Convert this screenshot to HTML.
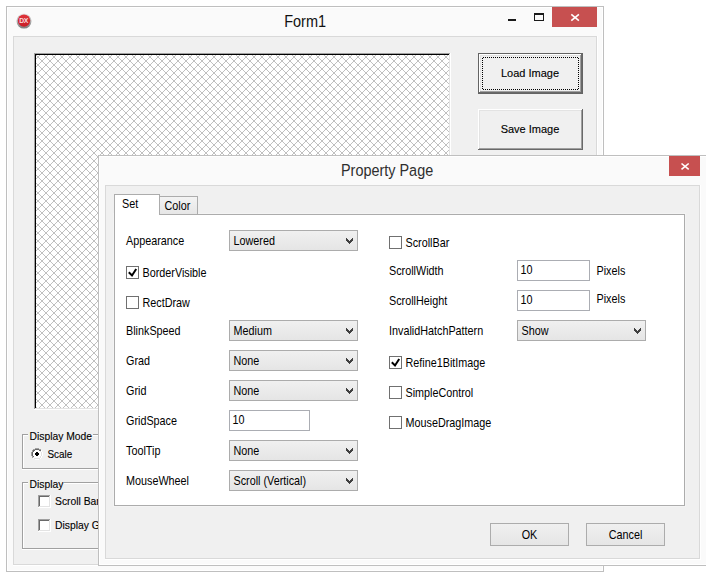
<!DOCTYPE html><html><head><meta charset="utf-8"><title>Form1</title><style>html,body{margin:0;padding:0;width:717px;height:576px;overflow:hidden;background:#fff;}svg{display:block;font-family:"Liberation Sans",sans-serif;}path{shape-rendering:geometricPrecision}circle{shape-rendering:geometricPrecision}text{shape-rendering:geometricPrecision}</style></head><body><svg width="717" height="576" viewBox="0 0 717 576" shape-rendering="crispEdges" font-family="Liberation Sans, sans-serif"><rect x="0" y="0" width="717" height="576" fill="#ffffff"/><rect x="6" y="6" width="598" height="566" fill="#fafafa"/><rect x="6" y="6" width="598" height="1" fill="#bfbfbf"/><rect x="6" y="571" width="598" height="1" fill="#bfbfbf"/><rect x="6" y="6" width="1" height="566" fill="#bfbfbf"/><rect x="603" y="6" width="1" height="566" fill="#bfbfbf"/><rect x="7" y="7" width="596" height="1" fill="#ffffff"/><rect x="7" y="570" width="596" height="1" fill="#ffffff"/><rect x="7" y="7" width="1" height="564" fill="#ffffff"/><rect x="602" y="7" width="1" height="564" fill="#ffffff"/><defs><linearGradient id="ring" x1="0" y1="0" x2="0" y2="1"><stop offset="0" stop-color="#e8e8e8"/><stop offset="1" stop-color="#7a7a7a"/></linearGradient><linearGradient id="redg" x1="0" y1="0" x2="0" y2="1"><stop offset="0" stop-color="#e0343b"/><stop offset="1" stop-color="#c81d26"/></linearGradient></defs><circle cx="24" cy="21.1" r="7.5" fill="url(#ring)"/><circle cx="24" cy="20.6" r="6.2" fill="url(#redg)"/><text x="23.7" y="23" font-size="6.8" font-weight="bold" fill="#fff" fill-opacity="0.85" text-anchor="middle" letter-spacing="-0.3">DX</text><text transform="translate(284.2 27) scale(0.93 1)" x="0" y="0" font-size="15.6" fill="#111" >Form1</text><rect x="508" y="19" width="8" height="2" fill="#1a1a1a"/><rect x="534" y="13" width="10" height="1" fill="#1a1a1a"/><rect x="534" y="20" width="10" height="1" fill="#1a1a1a"/><rect x="534" y="13" width="1" height="8" fill="#1a1a1a"/><rect x="543" y="13" width="1" height="8" fill="#1a1a1a"/><rect x="534" y="14" width="10" height="1" fill="#1a1a1a"/><rect x="552" y="7" width="45" height="20" fill="#c75050"/><path d="M571.3 14.4 L578.9 20.6 M578.9 14.4 L571.3 20.6" stroke="#fff" stroke-width="1.6"/><rect x="13" y="36" width="585" height="530" fill="#ffffff"/><rect x="13" y="36" width="584" height="529" fill="#d9d9d9"/><rect x="14" y="37" width="582" height="527" fill="#f0f0f0"/><defs><pattern id="hatch" x="34" y="53" width="8" height="8" patternUnits="userSpaceOnUse"><rect x="0" y="0" width="1" height="1" fill="#c0c0c0"/><rect x="7" y="0" width="1" height="1" fill="#c0c0c0"/><rect x="1" y="1" width="1" height="1" fill="#c0c0c0"/><rect x="6" y="1" width="1" height="1" fill="#c0c0c0"/><rect x="2" y="2" width="1" height="1" fill="#c0c0c0"/><rect x="5" y="2" width="1" height="1" fill="#c0c0c0"/><rect x="3" y="3" width="1" height="1" fill="#c0c0c0"/><rect x="4" y="3" width="1" height="1" fill="#c0c0c0"/><rect x="3" y="4" width="1" height="1" fill="#c0c0c0"/><rect x="4" y="4" width="1" height="1" fill="#c0c0c0"/><rect x="2" y="5" width="1" height="1" fill="#c0c0c0"/><rect x="5" y="5" width="1" height="1" fill="#c0c0c0"/><rect x="1" y="6" width="1" height="1" fill="#c0c0c0"/><rect x="6" y="6" width="1" height="1" fill="#c0c0c0"/><rect x="0" y="7" width="1" height="1" fill="#c0c0c0"/><rect x="7" y="7" width="1" height="1" fill="#c0c0c0"/></pattern></defs><rect x="34" y="53" width="417" height="357" fill="#ffffff"/><rect x="34" y="53" width="416" height="1" fill="#a0a0a0"/><rect x="34" y="53" width="1" height="356" fill="#a0a0a0"/><rect x="35" y="54" width="414" height="1" fill="#000000"/><rect x="35" y="54" width="1" height="354" fill="#000000"/><rect x="35" y="408" width="414" height="1" fill="#e3e3e3"/><rect x="449" y="54" width="1" height="355" fill="#e3e3e3"/><rect x="36" y="55" width="413" height="353" fill="url(#hatch)"/><rect x="478" y="53" width="105" height="41" fill="#f0f0f0"/><rect x="478" y="53" width="105" height="1" fill="#646464"/><rect x="478" y="93" width="105" height="1" fill="#646464"/><rect x="478" y="53" width="1" height="41" fill="#646464"/><rect x="582" y="53" width="1" height="41" fill="#646464"/><rect x="479" y="54" width="103" height="1" fill="#ffffff"/><rect x="479" y="54" width="1" height="39" fill="#ffffff"/><rect x="479" y="92" width="103" height="1" fill="#696969"/><rect x="581" y="54" width="1" height="39" fill="#696969"/><rect x="480" y="55" width="101" height="1" fill="#e3e3e3"/><rect x="480" y="55" width="1" height="37" fill="#e3e3e3"/><rect x="480" y="91" width="101" height="1" fill="#a0a0a0"/><rect x="580" y="55" width="1" height="37" fill="#a0a0a0"/><defs><pattern id="chk" x="0" y="0" width="2" height="2" patternUnits="userSpaceOnUse"><rect x="0" y="0" width="1" height="1" fill="#000"/><rect x="1" y="1" width="1" height="1" fill="#000"/></pattern></defs><rect x="482" y="57" width="97" height="1" fill="url(#chk)"/><rect x="482" y="89" width="97" height="1" fill="url(#chk)"/><rect x="482" y="57" width="1" height="33" fill="url(#chk)"/><rect x="578" y="57" width="1" height="33" fill="url(#chk)"/><text x="530" y="77" font-size="11" fill="#000" text-anchor="middle" stroke="#000" stroke-width="0.12">Load Image</text><rect x="478" y="109" width="105" height="41" fill="#f0f0f0"/><rect x="478" y="109" width="105" height="1" fill="#ffffff"/><rect x="478" y="109" width="1" height="41" fill="#ffffff"/><rect x="478" y="149" width="105" height="1" fill="#696969"/><rect x="582" y="109" width="1" height="41" fill="#696969"/><rect x="479" y="110" width="103" height="1" fill="#e3e3e3"/><rect x="479" y="110" width="1" height="39" fill="#e3e3e3"/><rect x="479" y="148" width="103" height="1" fill="#a0a0a0"/><rect x="581" y="110" width="1" height="39" fill="#a0a0a0"/><text x="530" y="133" font-size="11" fill="#000" text-anchor="middle" stroke="#000" stroke-width="0.12">Save Image</text><rect x="22" y="434" width="278" height="1" fill="#a0a0a0"/><rect x="22" y="434" width="1" height="35" fill="#a0a0a0"/><rect x="23" y="435" width="277" height="1" fill="#ffffff"/><rect x="23" y="435" width="1" height="34" fill="#ffffff"/><rect x="22" y="468" width="278" height="1" fill="#a0a0a0"/><rect x="22" y="469" width="279" height="1" fill="#ffffff"/><rect x="28" y="428" width="65" height="12" fill="#f0f0f0"/><text transform="translate(29.5 440) scale(0.94 1)" x="0" y="0" font-size="11" fill="#000" stroke="#000" stroke-width="0.12">Display Mode</text><rect x="35" y="448" width="4" height="1" fill="#ffffff"/><rect x="33" y="449" width="8" height="1" fill="#ffffff"/><rect x="32" y="450" width="10" height="1" fill="#ffffff"/><rect x="32" y="451" width="10" height="1" fill="#ffffff"/><rect x="31" y="452" width="12" height="1" fill="#ffffff"/><rect x="31" y="453" width="12" height="1" fill="#ffffff"/><rect x="31" y="454" width="12" height="1" fill="#ffffff"/><rect x="31" y="455" width="12" height="1" fill="#ffffff"/><rect x="32" y="456" width="10" height="1" fill="#ffffff"/><rect x="32" y="457" width="10" height="1" fill="#ffffff"/><rect x="33" y="458" width="8" height="1" fill="#ffffff"/><rect x="35" y="459" width="4" height="1" fill="#ffffff"/><rect x="35" y="448" width="1" height="1" fill="#a0a0a0"/><rect x="36" y="448" width="1" height="1" fill="#a0a0a0"/><rect x="37" y="448" width="1" height="1" fill="#a0a0a0"/><rect x="38" y="448" width="1" height="1" fill="#a0a0a0"/><rect x="33" y="449" width="1" height="1" fill="#a0a0a0"/><rect x="34" y="449" width="1" height="1" fill="#a0a0a0"/><rect x="35" y="449" width="1" height="1" fill="#696969"/><rect x="36" y="449" width="1" height="1" fill="#696969"/><rect x="37" y="449" width="1" height="1" fill="#696969"/><rect x="38" y="449" width="1" height="1" fill="#696969"/><rect x="39" y="449" width="1" height="1" fill="#a0a0a0"/><rect x="40" y="449" width="1" height="1" fill="#a0a0a0"/><rect x="32" y="450" width="1" height="1" fill="#a0a0a0"/><rect x="33" y="450" width="1" height="1" fill="#696969"/><rect x="34" y="450" width="1" height="1" fill="#696969"/><rect x="39" y="450" width="1" height="1" fill="#696969"/><rect x="40" y="450" width="1" height="1" fill="#696969"/><rect x="32" y="451" width="1" height="1" fill="#a0a0a0"/><rect x="33" y="451" width="1" height="1" fill="#696969"/><rect x="40" y="451" width="1" height="1" fill="#e3e3e3"/><rect x="31" y="452" width="1" height="1" fill="#a0a0a0"/><rect x="32" y="452" width="1" height="1" fill="#696969"/><rect x="41" y="452" width="1" height="1" fill="#e3e3e3"/><rect x="31" y="453" width="1" height="1" fill="#a0a0a0"/><rect x="32" y="453" width="1" height="1" fill="#696969"/><rect x="41" y="453" width="1" height="1" fill="#e3e3e3"/><rect x="31" y="454" width="1" height="1" fill="#a0a0a0"/><rect x="32" y="454" width="1" height="1" fill="#696969"/><rect x="41" y="454" width="1" height="1" fill="#e3e3e3"/><rect x="31" y="455" width="1" height="1" fill="#a0a0a0"/><rect x="32" y="455" width="1" height="1" fill="#696969"/><rect x="41" y="455" width="1" height="1" fill="#e3e3e3"/><rect x="32" y="456" width="1" height="1" fill="#a0a0a0"/><rect x="33" y="456" width="1" height="1" fill="#696969"/><rect x="40" y="456" width="1" height="1" fill="#e3e3e3"/><rect x="32" y="457" width="1" height="1" fill="#a0a0a0"/><rect x="33" y="457" width="1" height="1" fill="#e3e3e3"/><rect x="40" y="457" width="1" height="1" fill="#e3e3e3"/><rect x="34" y="458" width="1" height="1" fill="#e3e3e3"/><rect x="35" y="458" width="1" height="1" fill="#e3e3e3"/><rect x="36" y="458" width="1" height="1" fill="#e3e3e3"/><rect x="37" y="458" width="1" height="1" fill="#e3e3e3"/><rect x="38" y="458" width="1" height="1" fill="#e3e3e3"/><rect x="39" y="458" width="1" height="1" fill="#e3e3e3"/><rect x="36" y="452" width="1" height="1" fill="#000000"/><rect x="37" y="452" width="1" height="1" fill="#000000"/><rect x="35" y="453" width="1" height="1" fill="#000000"/><rect x="36" y="453" width="1" height="1" fill="#000000"/><rect x="37" y="453" width="1" height="1" fill="#000000"/><rect x="38" y="453" width="1" height="1" fill="#000000"/><rect x="35" y="454" width="1" height="1" fill="#000000"/><rect x="36" y="454" width="1" height="1" fill="#000000"/><rect x="37" y="454" width="1" height="1" fill="#000000"/><rect x="38" y="454" width="1" height="1" fill="#000000"/><rect x="36" y="455" width="1" height="1" fill="#000000"/><rect x="37" y="455" width="1" height="1" fill="#000000"/><text transform="translate(47.5 458) scale(0.9 1)" x="0" y="0" font-size="11" fill="#000" stroke="#000" stroke-width="0.12">Scale</text><rect x="22" y="482" width="278" height="1" fill="#a0a0a0"/><rect x="22" y="482" width="1" height="67" fill="#a0a0a0"/><rect x="23" y="483" width="277" height="1" fill="#ffffff"/><rect x="23" y="483" width="1" height="66" fill="#ffffff"/><rect x="22" y="548" width="278" height="1" fill="#a0a0a0"/><rect x="22" y="549" width="279" height="1" fill="#ffffff"/><rect x="28" y="476" width="36" height="12" fill="#f0f0f0"/><text transform="translate(29.5 488) scale(0.94 1)" x="0" y="0" font-size="11" fill="#000" stroke="#000" stroke-width="0.12">Display</text><rect x="38" y="495" width="13" height="13" fill="#ffffff"/><rect x="38" y="495" width="12" height="1" fill="#a0a0a0"/><rect x="38" y="495" width="1" height="12" fill="#a0a0a0"/><rect x="39" y="496" width="10" height="1" fill="#696969"/><rect x="39" y="496" width="1" height="10" fill="#696969"/><rect x="39" y="506" width="11" height="1" fill="#e3e3e3"/><rect x="49" y="496" width="1" height="11" fill="#e3e3e3"/><text transform="translate(55 505) scale(0.94 1)" x="0" y="0" font-size="11" fill="#000" stroke="#000" stroke-width="0.12">Scroll Bar</text><rect x="38" y="519" width="13" height="13" fill="#ffffff"/><rect x="38" y="519" width="12" height="1" fill="#a0a0a0"/><rect x="38" y="519" width="1" height="12" fill="#a0a0a0"/><rect x="39" y="520" width="10" height="1" fill="#696969"/><rect x="39" y="520" width="1" height="10" fill="#696969"/><rect x="39" y="530" width="11" height="1" fill="#e3e3e3"/><rect x="49" y="520" width="1" height="11" fill="#e3e3e3"/><text transform="translate(55 529) scale(0.94 1)" x="0" y="0" font-size="11" fill="#000" stroke="#000" stroke-width="0.12">Display Grid</text><rect x="98" y="155" width="608" height="411" fill="#fafafa"/><rect x="98" y="155" width="608" height="1" fill="#bfbfbf"/><rect x="98" y="155" width="1" height="411" fill="#bfbfbf"/><rect x="98" y="565" width="608" height="1" fill="#bfbfbf"/><rect x="99" y="156" width="607" height="1" fill="#ffffff"/><rect x="99" y="156" width="1" height="409" fill="#ffffff"/><rect x="99" y="564" width="607" height="1" fill="#ffffff"/><text transform="translate(341 176) scale(0.925 1)" x="0" y="0" font-size="15.6" fill="#2e2e2e" >Property Page</text><rect x="669" y="156" width="31" height="20" fill="#c75050"/><path d="M681.5 163.5 L688.7 169.4 M688.7 163.5 L681.5 169.4" stroke="#fff" stroke-width="1.6"/><rect x="105" y="185" width="596" height="375" fill="#ffffff"/><rect x="105" y="185" width="595" height="374" fill="#d9d9d9"/><rect x="106" y="186" width="593" height="372" fill="#f0f0f0"/><rect x="113" y="213" width="573" height="294" fill="#f4f4f4"/><rect x="114" y="214" width="571" height="292" fill="#acacac"/><rect x="115" y="215" width="569" height="290" fill="#ffffff"/><defs><linearGradient id="tg" x1="0" y1="0" x2="0" y2="1"><stop offset="0" stop-color="#f3f3f3"/><stop offset="1" stop-color="#e6e6e6"/></linearGradient><linearGradient id="cg" x1="0" y1="0" x2="0" y2="1"><stop offset="0" stop-color="#f0f0f0"/><stop offset="1" stop-color="#e5e5e5"/></linearGradient></defs><rect x="159" y="196" width="39" height="19" fill="#acacac"/><rect x="160" y="197" width="37" height="17" fill="url(#tg)"/><rect x="114" y="194" width="46" height="21" fill="#acacac"/><rect x="115" y="195" width="44" height="21" fill="#ffffff"/><text transform="translate(122 208) scale(0.9 1)" x="0" y="0" font-size="12" fill="#000" >Set</text><text transform="translate(164.5 210) scale(0.9 1)" x="0" y="0" font-size="12" fill="#000" >Color</text><text transform="translate(126 245) scale(0.9 1)" x="0" y="0" font-size="12" fill="#000" >Appearance</text><rect x="229" y="230" width="129" height="21" fill="#acacac"/><rect x="230" y="231" width="127" height="19" fill="url(#cg)"/><text transform="translate(233.5 245) scale(0.9 1)" x="0" y="0" font-size="12" fill="#000" >Lowered</text><rect x="346" y="238" width="1" height="1" fill="#404040"/><rect x="352" y="238" width="1" height="1" fill="#404040"/><rect x="346" y="239" width="1" height="1" fill="#404040"/><rect x="347" y="239" width="1" height="1" fill="#404040"/><rect x="351" y="239" width="1" height="1" fill="#404040"/><rect x="352" y="239" width="1" height="1" fill="#404040"/><rect x="346" y="240" width="1" height="1" fill="#404040"/><rect x="347" y="240" width="1" height="1" fill="#404040"/><rect x="348" y="240" width="1" height="1" fill="#404040"/><rect x="350" y="240" width="1" height="1" fill="#404040"/><rect x="351" y="240" width="1" height="1" fill="#404040"/><rect x="352" y="240" width="1" height="1" fill="#404040"/><rect x="347" y="241" width="1" height="1" fill="#404040"/><rect x="348" y="241" width="1" height="1" fill="#404040"/><rect x="349" y="241" width="1" height="1" fill="#404040"/><rect x="350" y="241" width="1" height="1" fill="#404040"/><rect x="351" y="241" width="1" height="1" fill="#404040"/><rect x="348" y="242" width="1" height="1" fill="#404040"/><rect x="349" y="242" width="1" height="1" fill="#404040"/><rect x="350" y="242" width="1" height="1" fill="#404040"/><rect x="349" y="243" width="1" height="1" fill="#404040"/><rect x="126" y="266" width="13" height="13" fill="#707070"/><rect x="127" y="267" width="11" height="11" fill="#ffffff"/><path d="M128.8 272.3 L132 275.5 L136.2 269" fill="none" stroke="#000" stroke-width="2"/><text transform="translate(142.5 277) scale(0.9 1)" x="0" y="0" font-size="12" fill="#000" >BorderVisible</text><rect x="126" y="296" width="13" height="13" fill="#707070"/><rect x="127" y="297" width="11" height="11" fill="#ffffff"/><text transform="translate(142.5 307) scale(0.9 1)" x="0" y="0" font-size="12" fill="#000" >RectDraw</text><text transform="translate(126 335) scale(0.9 1)" x="0" y="0" font-size="12" fill="#000" >BlinkSpeed</text><rect x="229" y="320" width="129" height="21" fill="#acacac"/><rect x="230" y="321" width="127" height="19" fill="url(#cg)"/><text transform="translate(233.5 335) scale(0.9 1)" x="0" y="0" font-size="12" fill="#000" >Medium</text><rect x="346" y="328" width="1" height="1" fill="#404040"/><rect x="352" y="328" width="1" height="1" fill="#404040"/><rect x="346" y="329" width="1" height="1" fill="#404040"/><rect x="347" y="329" width="1" height="1" fill="#404040"/><rect x="351" y="329" width="1" height="1" fill="#404040"/><rect x="352" y="329" width="1" height="1" fill="#404040"/><rect x="346" y="330" width="1" height="1" fill="#404040"/><rect x="347" y="330" width="1" height="1" fill="#404040"/><rect x="348" y="330" width="1" height="1" fill="#404040"/><rect x="350" y="330" width="1" height="1" fill="#404040"/><rect x="351" y="330" width="1" height="1" fill="#404040"/><rect x="352" y="330" width="1" height="1" fill="#404040"/><rect x="347" y="331" width="1" height="1" fill="#404040"/><rect x="348" y="331" width="1" height="1" fill="#404040"/><rect x="349" y="331" width="1" height="1" fill="#404040"/><rect x="350" y="331" width="1" height="1" fill="#404040"/><rect x="351" y="331" width="1" height="1" fill="#404040"/><rect x="348" y="332" width="1" height="1" fill="#404040"/><rect x="349" y="332" width="1" height="1" fill="#404040"/><rect x="350" y="332" width="1" height="1" fill="#404040"/><rect x="349" y="333" width="1" height="1" fill="#404040"/><text transform="translate(126 365) scale(0.9 1)" x="0" y="0" font-size="12" fill="#000" >Grad</text><rect x="229" y="350" width="129" height="21" fill="#acacac"/><rect x="230" y="351" width="127" height="19" fill="url(#cg)"/><text transform="translate(233.5 365) scale(0.9 1)" x="0" y="0" font-size="12" fill="#000" >None</text><rect x="346" y="358" width="1" height="1" fill="#404040"/><rect x="352" y="358" width="1" height="1" fill="#404040"/><rect x="346" y="359" width="1" height="1" fill="#404040"/><rect x="347" y="359" width="1" height="1" fill="#404040"/><rect x="351" y="359" width="1" height="1" fill="#404040"/><rect x="352" y="359" width="1" height="1" fill="#404040"/><rect x="346" y="360" width="1" height="1" fill="#404040"/><rect x="347" y="360" width="1" height="1" fill="#404040"/><rect x="348" y="360" width="1" height="1" fill="#404040"/><rect x="350" y="360" width="1" height="1" fill="#404040"/><rect x="351" y="360" width="1" height="1" fill="#404040"/><rect x="352" y="360" width="1" height="1" fill="#404040"/><rect x="347" y="361" width="1" height="1" fill="#404040"/><rect x="348" y="361" width="1" height="1" fill="#404040"/><rect x="349" y="361" width="1" height="1" fill="#404040"/><rect x="350" y="361" width="1" height="1" fill="#404040"/><rect x="351" y="361" width="1" height="1" fill="#404040"/><rect x="348" y="362" width="1" height="1" fill="#404040"/><rect x="349" y="362" width="1" height="1" fill="#404040"/><rect x="350" y="362" width="1" height="1" fill="#404040"/><rect x="349" y="363" width="1" height="1" fill="#404040"/><text transform="translate(126 395) scale(0.9 1)" x="0" y="0" font-size="12" fill="#000" >Grid</text><rect x="229" y="380" width="129" height="21" fill="#acacac"/><rect x="230" y="381" width="127" height="19" fill="url(#cg)"/><text transform="translate(233.5 395) scale(0.9 1)" x="0" y="0" font-size="12" fill="#000" >None</text><rect x="346" y="388" width="1" height="1" fill="#404040"/><rect x="352" y="388" width="1" height="1" fill="#404040"/><rect x="346" y="389" width="1" height="1" fill="#404040"/><rect x="347" y="389" width="1" height="1" fill="#404040"/><rect x="351" y="389" width="1" height="1" fill="#404040"/><rect x="352" y="389" width="1" height="1" fill="#404040"/><rect x="346" y="390" width="1" height="1" fill="#404040"/><rect x="347" y="390" width="1" height="1" fill="#404040"/><rect x="348" y="390" width="1" height="1" fill="#404040"/><rect x="350" y="390" width="1" height="1" fill="#404040"/><rect x="351" y="390" width="1" height="1" fill="#404040"/><rect x="352" y="390" width="1" height="1" fill="#404040"/><rect x="347" y="391" width="1" height="1" fill="#404040"/><rect x="348" y="391" width="1" height="1" fill="#404040"/><rect x="349" y="391" width="1" height="1" fill="#404040"/><rect x="350" y="391" width="1" height="1" fill="#404040"/><rect x="351" y="391" width="1" height="1" fill="#404040"/><rect x="348" y="392" width="1" height="1" fill="#404040"/><rect x="349" y="392" width="1" height="1" fill="#404040"/><rect x="350" y="392" width="1" height="1" fill="#404040"/><rect x="349" y="393" width="1" height="1" fill="#404040"/><text transform="translate(126 425) scale(0.9 1)" x="0" y="0" font-size="12" fill="#000" >GridSpace</text><rect x="229" y="410" width="81" height="21" fill="#abadb3"/><rect x="230" y="411" width="79" height="19" fill="#ffffff"/><text transform="translate(232.5 424) scale(0.9 1)" x="0" y="0" font-size="12" fill="#000" >10</text><text transform="translate(126 455) scale(0.9 1)" x="0" y="0" font-size="12" fill="#000" >ToolTip</text><rect x="229" y="440" width="129" height="21" fill="#acacac"/><rect x="230" y="441" width="127" height="19" fill="url(#cg)"/><text transform="translate(233.5 455) scale(0.9 1)" x="0" y="0" font-size="12" fill="#000" >None</text><rect x="346" y="448" width="1" height="1" fill="#404040"/><rect x="352" y="448" width="1" height="1" fill="#404040"/><rect x="346" y="449" width="1" height="1" fill="#404040"/><rect x="347" y="449" width="1" height="1" fill="#404040"/><rect x="351" y="449" width="1" height="1" fill="#404040"/><rect x="352" y="449" width="1" height="1" fill="#404040"/><rect x="346" y="450" width="1" height="1" fill="#404040"/><rect x="347" y="450" width="1" height="1" fill="#404040"/><rect x="348" y="450" width="1" height="1" fill="#404040"/><rect x="350" y="450" width="1" height="1" fill="#404040"/><rect x="351" y="450" width="1" height="1" fill="#404040"/><rect x="352" y="450" width="1" height="1" fill="#404040"/><rect x="347" y="451" width="1" height="1" fill="#404040"/><rect x="348" y="451" width="1" height="1" fill="#404040"/><rect x="349" y="451" width="1" height="1" fill="#404040"/><rect x="350" y="451" width="1" height="1" fill="#404040"/><rect x="351" y="451" width="1" height="1" fill="#404040"/><rect x="348" y="452" width="1" height="1" fill="#404040"/><rect x="349" y="452" width="1" height="1" fill="#404040"/><rect x="350" y="452" width="1" height="1" fill="#404040"/><rect x="349" y="453" width="1" height="1" fill="#404040"/><text transform="translate(126 485) scale(0.9 1)" x="0" y="0" font-size="12" fill="#000" >MouseWheel</text><rect x="229" y="470" width="129" height="21" fill="#acacac"/><rect x="230" y="471" width="127" height="19" fill="url(#cg)"/><text transform="translate(233.5 485) scale(0.9 1)" x="0" y="0" font-size="12" fill="#000" >Scroll (Vertical)</text><rect x="346" y="478" width="1" height="1" fill="#404040"/><rect x="352" y="478" width="1" height="1" fill="#404040"/><rect x="346" y="479" width="1" height="1" fill="#404040"/><rect x="347" y="479" width="1" height="1" fill="#404040"/><rect x="351" y="479" width="1" height="1" fill="#404040"/><rect x="352" y="479" width="1" height="1" fill="#404040"/><rect x="346" y="480" width="1" height="1" fill="#404040"/><rect x="347" y="480" width="1" height="1" fill="#404040"/><rect x="348" y="480" width="1" height="1" fill="#404040"/><rect x="350" y="480" width="1" height="1" fill="#404040"/><rect x="351" y="480" width="1" height="1" fill="#404040"/><rect x="352" y="480" width="1" height="1" fill="#404040"/><rect x="347" y="481" width="1" height="1" fill="#404040"/><rect x="348" y="481" width="1" height="1" fill="#404040"/><rect x="349" y="481" width="1" height="1" fill="#404040"/><rect x="350" y="481" width="1" height="1" fill="#404040"/><rect x="351" y="481" width="1" height="1" fill="#404040"/><rect x="348" y="482" width="1" height="1" fill="#404040"/><rect x="349" y="482" width="1" height="1" fill="#404040"/><rect x="350" y="482" width="1" height="1" fill="#404040"/><rect x="349" y="483" width="1" height="1" fill="#404040"/><rect x="389" y="236" width="13" height="13" fill="#707070"/><rect x="390" y="237" width="11" height="11" fill="#ffffff"/><text transform="translate(405.5 247) scale(0.9 1)" x="0" y="0" font-size="12" fill="#000" >ScrollBar</text><text transform="translate(389 275) scale(0.9 1)" x="0" y="0" font-size="12" fill="#000" >ScrollWidth</text><rect x="517" y="260" width="73" height="21" fill="#abadb3"/><rect x="518" y="261" width="71" height="19" fill="#ffffff"/><text transform="translate(520.5 274) scale(0.9 1)" x="0" y="0" font-size="12" fill="#000" >10</text><text transform="translate(596.5 275) scale(0.9 1)" x="0" y="0" font-size="12" fill="#000" >Pixels</text><text transform="translate(389 305) scale(0.9 1)" x="0" y="0" font-size="12" fill="#000" >ScrollHeight</text><rect x="517" y="290" width="73" height="21" fill="#abadb3"/><rect x="518" y="291" width="71" height="19" fill="#ffffff"/><text transform="translate(520.5 304) scale(0.9 1)" x="0" y="0" font-size="12" fill="#000" >10</text><text transform="translate(596.5 303) scale(0.9 1)" x="0" y="0" font-size="12" fill="#000" >Pixels</text><text transform="translate(389 335) scale(0.9 1)" x="0" y="0" font-size="12" fill="#000" >InvalidHatchPattern</text><rect x="517" y="320" width="129" height="21" fill="#acacac"/><rect x="518" y="321" width="127" height="19" fill="url(#cg)"/><text transform="translate(521.5 335) scale(0.9 1)" x="0" y="0" font-size="12" fill="#000" >Show</text><rect x="634" y="328" width="1" height="1" fill="#404040"/><rect x="640" y="328" width="1" height="1" fill="#404040"/><rect x="634" y="329" width="1" height="1" fill="#404040"/><rect x="635" y="329" width="1" height="1" fill="#404040"/><rect x="639" y="329" width="1" height="1" fill="#404040"/><rect x="640" y="329" width="1" height="1" fill="#404040"/><rect x="634" y="330" width="1" height="1" fill="#404040"/><rect x="635" y="330" width="1" height="1" fill="#404040"/><rect x="636" y="330" width="1" height="1" fill="#404040"/><rect x="638" y="330" width="1" height="1" fill="#404040"/><rect x="639" y="330" width="1" height="1" fill="#404040"/><rect x="640" y="330" width="1" height="1" fill="#404040"/><rect x="635" y="331" width="1" height="1" fill="#404040"/><rect x="636" y="331" width="1" height="1" fill="#404040"/><rect x="637" y="331" width="1" height="1" fill="#404040"/><rect x="638" y="331" width="1" height="1" fill="#404040"/><rect x="639" y="331" width="1" height="1" fill="#404040"/><rect x="636" y="332" width="1" height="1" fill="#404040"/><rect x="637" y="332" width="1" height="1" fill="#404040"/><rect x="638" y="332" width="1" height="1" fill="#404040"/><rect x="637" y="333" width="1" height="1" fill="#404040"/><rect x="389" y="356" width="13" height="13" fill="#707070"/><rect x="390" y="357" width="11" height="11" fill="#ffffff"/><path d="M391.8 362.3 L395 365.5 L399.2 359" fill="none" stroke="#000" stroke-width="2"/><text transform="translate(405.5 367) scale(0.9 1)" x="0" y="0" font-size="12" fill="#000" >Refine1BitImage</text><rect x="389" y="386" width="13" height="13" fill="#707070"/><rect x="390" y="387" width="11" height="11" fill="#ffffff"/><text transform="translate(405.5 397) scale(0.9 1)" x="0" y="0" font-size="12" fill="#000" >SimpleControl</text><rect x="389" y="416" width="13" height="13" fill="#707070"/><rect x="390" y="417" width="11" height="11" fill="#ffffff"/><text transform="translate(405.5 427) scale(0.9 1)" x="0" y="0" font-size="12" fill="#000" >MouseDragImage</text><rect x="490" y="523" width="79" height="23" fill="#acacac"/><rect x="491" y="524" width="77" height="21" fill="url(#cg)"/><text transform="translate(529.5 539) scale(0.9 1)" x="0" y="0" font-size="12" fill="#000" text-anchor="middle" >OK</text><rect x="586" y="523" width="79" height="23" fill="#acacac"/><rect x="587" y="524" width="77" height="21" fill="url(#cg)"/><text transform="translate(625.5 539) scale(0.9 1)" x="0" y="0" font-size="12" fill="#000" text-anchor="middle" >Cancel</text></svg></body></html>
